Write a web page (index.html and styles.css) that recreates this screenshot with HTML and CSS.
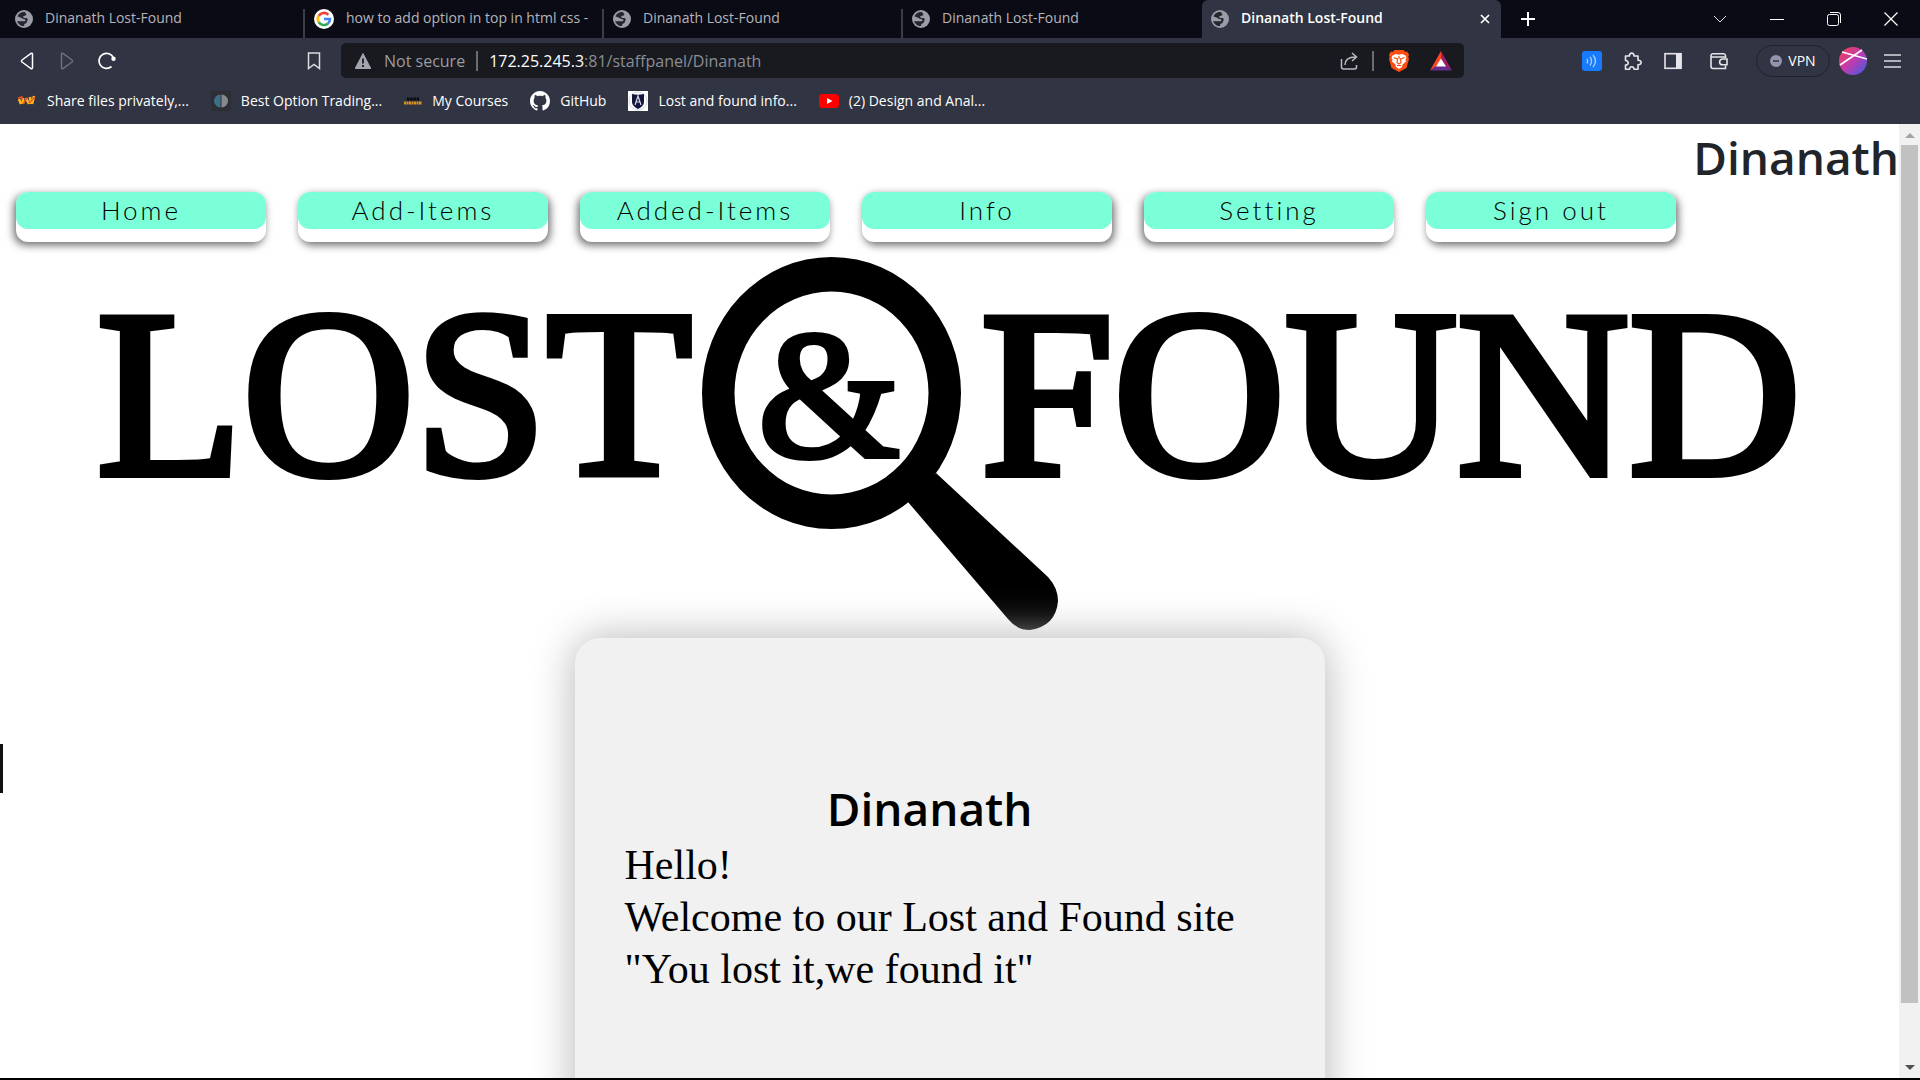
FILE: index.html
```html
<!DOCTYPE html>
<html lang="en">
<head>
<meta charset="utf-8">
<title>Dinanath Lost-Found</title>
<link rel="stylesheet" href="styles.css">
</head>
<body>
<svg class="defs" aria-hidden="true">
  <symbol id="globe" viewBox="0 0 18 18">
    <circle cx="9" cy="9" r="9" fill="#9a9da8"/>
    <path d="M10 2C6.500 1.600 3.500 3.300 2.300 6.500c1.300-.3 2 .8 3.200 1 .8.200 1.300 1 2.400 1.200 1.200.2 2.300.4 2.600 1.400.2.900-1 1.300-2.200 1.200-1.600-.1-4 .2-6.200-.3C3 14 6 16.500 9.200 16c-.3-1.300.2-2 1.300-2.400 1.500-.6 1.300-2.200 2-3.200.5-.8.200-1.900-.9-2.300-1.300-.4-2.600.2-3.300-.9-.5-.8.300-1.600 1.400-1.500 1.200.1 1.900-.6 1.500-1.600-.2-.7-.9-1-1.200-2.100Z" fill="#25262f"/>
  </symbol>
</svg>

<header class="chrome">
  <div class="tabs">
    <button class="tab"><svg class="icon18"><use href="#globe"/></svg><span>Dinanath Lost-Found</span></button>
    <button class="tab"><svg class="icon20" viewBox="0 0 20 20"><circle cx="10" cy="10" r="10" fill="#fff"/><g fill="none" stroke-width="2.600"><path d="M4.800 6.800A6 6 0 0 1 14.300 5.800" stroke="#ea4335"/><path d="M4.800 13.200A6 6 0 0 1 4.800 6.800" stroke="#fbbc05"/><path d="M13.900 14.500A6 6 0 0 1 4.800 13.200" stroke="#34a853"/><path d="M10 10H16A6 6 0 0 1 13.900 14.500" stroke="#4285f4"/></g></svg><span>how to add option in top in html css -</span></button>
    <button class="tab"><svg class="icon18"><use href="#globe"/></svg><span>Dinanath Lost-Found</span></button>
    <button class="tab"><svg class="icon18"><use href="#globe"/></svg><span>Dinanath Lost-Found</span></button>
    <button class="tab active"><svg class="icon18"><use href="#globe"/></svg><span>Dinanath Lost-Found</span><svg class="close" viewBox="0 0 10 10"><path d="M1 1l8 8M9 1l-8 8" stroke="#fff" stroke-width="1.700"/></svg></button>
    <button class="plain newtab" aria-label="New tab"><svg class="icon16" viewBox="0 0 16 16"><path d="M8 1v14M1 8h14" stroke="#fff" stroke-width="2"/></svg></button>
    <div class="window-controls">
      <button class="plain" aria-label="Search tabs"><svg class="icon14" viewBox="0 0 14 14"><path d="M1 4l6 6 6-6" fill="none" stroke="#ddd"/></svg></button>
      <button class="plain" aria-label="Minimize"><svg class="icon14" viewBox="0 0 14 14"><path d="M0 7.500h14" stroke="#fff"/></svg></button>
      <button class="plain" aria-label="Restore"><svg class="icon14" viewBox="0 0 14 14"><g fill="none" stroke="#fff"><rect x=".5" y="2.500" width="11" height="11" rx="2"/><path d="M3 .5h8a2.500 2.500 0 0 1 2.500 2.500v8"/></g></svg></button>
      <button class="plain" aria-label="Close"><svg class="icon14" viewBox="0 0 14 14"><path d="M.5.5l13 13M13.500.5l-13 13" stroke="#fff" stroke-width="1.200"/></svg></button>
    </div>
  </div>

  <div class="toolbar">
    <div class="nav-tools">
      <button class="plain" aria-label="Back"><svg class="icon18" viewBox="0 0 18 18"><path d="M14.500 2v14a1 1 0 0 1-1.500.7L4 10a1.200 1.200 0 0 1 0-2l9-6.700a1 1 0 0 1 1.500.7Z" fill="none" stroke="#fff" stroke-width="1.500"/></svg></button>
      <button class="plain" aria-label="Forward"><svg class="icon18" viewBox="0 0 18 18"><path d="M3.500 2v14a1 1 0 0 0 1.500.7L14 10a1.200 1.200 0 0 0 0-2L5 1.300A1 1 0 0 0 3.500 2Z" fill="none" stroke="#6d6f7c" stroke-width="1.500"/></svg></button>
      <button class="plain" aria-label="Reload"><svg class="icon18" viewBox="0 0 18 18"><path d="M13.500 14.500A7.500 7.500 0 1 1 15.500 6" fill="none" stroke="#fff" stroke-width="1.700"/><circle cx="15.500" cy="6.800" r="2.200" fill="#fff"/></svg></button>
      <button class="plain mark" aria-label="Bookmark"><svg class="icon18" viewBox="0 0 18 18"><path d="M3.500 1h11v15.500L9 12.500l-5.500 4Z" fill="none" stroke="#ddd" stroke-width="1.500"/></svg></button>
    </div>
    <div class="address">
      <svg class="icon16" viewBox="0 0 16 16"><path d="M8 .5L15.800 15.500H.2Z" fill="#a3a6af" stroke="#a3a6af" stroke-linejoin="round"/><path d="M8 5.500v5M8 12v2" stroke="#181a20" stroke-width="1.800"/></svg>
      <span class="secure">Not secure</span>
      <span class="bar"></span>
      <span class="url"><b>172.25.245.3</b>:81/staffpanel/Dinanath</span>
      <button class="plain" aria-label="Share"><svg class="icon18" viewBox="0 0 18 18"><g fill="none" stroke="#b9bbc1" stroke-width="1.500"><path d="M1.500 7v8a2 2 0 0 0 2 2h11a2 2 0 0 0 2-2v-2"/><path d="M5 13c0-5 3-8 10.500-8M12 1l4.500 4-4.500 4"/></g></svg></button>
      <span class="bar bar-gap"></span>
      <button class="plain shield" aria-label="Brave Shields"><svg class="icon22" viewBox="0 0 22 22"><path d="M6.500 0h9l1.500 1.800 2-.3 2 3-.7 2.500.7 2-2.500 9L11 22l-7.500-4L1 9l.7-2L1 4.500l2-3 2 .3Z" fill="#fb4e12"/><path d="M8 4l3 .7L14 4l3.500 1.500 1 2.500-1 1.500.5 2-3.500 3L14 17l-3 2-3-2-.5-2.500-3.500-3 .5-2-1-1.500 1-2.500Z" fill="#fff"/><path d="M5.500 7.500L9.500 9l-.500 3.500L11 14l2-1.500L12.500 9l4-1.500M11 6v3M9 15.500h4" stroke="#fb4e12" stroke-width="1.200" fill="none"/></svg></button>
      <button class="plain" aria-label="Rewards"><svg class="icon22" viewBox="0 0 22 22"><path d="M11 1L0 20.500 11 13Z" fill="#ff4724"/><path d="M11 1l11 19.500L11 13Z" fill="#9e1f63"/><path d="M0 20.500h22L11 13Z" fill="#662d91"/><path d="M11 8.500l5 8H6Z" fill="#fff"/></svg></button>
    </div>
    <div class="extensions">
      <button class="plain ext" aria-label="Read aloud"><svg class="icon20" viewBox="0 0 20 20"><rect width="20" height="20" rx="3" fill="#177bfb"/><path d="M5 8q1.500 2.200 0 4.500M8 6q3 4 0 8.500M11 4q5 6 0 12" fill="none" stroke="#a6cbff" stroke-width="1.400"/></svg></button>
      <button class="plain ext" aria-label="Extensions"><svg class="icon20" viewBox="0 0 20 20"><path d="M2.500 5h4c-.6-3.800 5-3.800 4.500 0h4v4.300c4.200-.3 4.200 4.800 0 4.500v4.500h-4c.2-3.500-4.600-3.500-4.400 0H2.500v-4.200c3.600 0 3.600-4.600 0-4.600Z" fill="none" stroke="#e6e6ea" stroke-width="1.600" stroke-linejoin="round"/></svg></button>
      <button class="plain ext wide" aria-label="Side panel"><svg class="icon18" viewBox="0 0 18 18"><rect x="1" y="1.700" width="16" height="14.600" fill="none" stroke="#e6e6ea" stroke-width="1.600"/><path d="M12 1h5.500v16H12Z" fill="#e6e6ea"/></svg></button>
      <button class="plain ext wide" aria-label="Wallet"><svg class="icon18" viewBox="0 0 18 18"><g fill="none" stroke="#e6e6ea" stroke-width="1.600"><path d="M15.500 6V3.500A2 2 0 0 0 13.500 1.700H3a2 2 0 0 0-2 2v10.800a2 2 0 0 0 2 2h12.500V13.500M1.500 5h14"/><path d="M17 7h-4.500a2.800 2.800 0 0 0 0 5.800H17Z"/></g></svg></button>
      <button class="vpn"><svg class="icon12" viewBox="0 0 12 12"><circle cx="6" cy="6" r="6" fill="#9394ab"/><path d="M3 6h6" stroke="#313442" stroke-width="1.500"/></svg>VPN</button>
      <button class="plain" aria-label="Profile"><svg class="icon28" viewBox="0 0 28 28"><defs><linearGradient id="av" x1="0" y1="0" x2="1" y2="1"><stop offset="0" stop-color="#f5414d"/><stop offset=".5" stop-color="#c03bb0"/><stop offset="1" stop-color="#355ee5"/></linearGradient></defs><circle cx="14" cy="14" r="14" fill="url(#av)"/><path d="M1 18L23 3M3 5l25 7" stroke="#fff" stroke-width="1.600"/></svg></button>
      <button class="plain menu" aria-label="Menu"><svg class="icon18" viewBox="0 0 18 18"><path d="M0 3h17M0 9h17M0 15h17" stroke="#d9dae0" stroke-width="1.700"/></svg></button>
    </div>
  </div>

  <nav class="bookmarks">
    <a href="#"><svg class="icon20" viewBox="0 0 20 20"><path d="M2 8l2 5M6 7v6M9 7l3 6M13 6l1 7M17 5l-2 8" stroke="#ffb320" stroke-width="2.600"/><path d="M1 7l4-1v3M6 13l4-6M12 12l6-6" stroke="#e8551b" stroke-width="1.400" fill="none"/></svg><span>Share files privately,...</span></a>
    <a href="#"><svg class="icon20" viewBox="0 0 20 20"><rect width="20" height="20" rx="2" fill="#2d2f35"/><path d="M9.500 3.500v13a6.500 6.500 0 0 1 0-13Z" fill="#3c7087"/><path d="M10.500 3.500v13a6.500 6.500 0 0 0 0-13Z" fill="#85898d"/></svg><span>Best Option Trading...</span></a>
    <a href="#"><svg class="icon18" viewBox="0 0 18 18"><path d="M3 7h12" stroke="#0b0b0d" stroke-width="3" stroke-dasharray="2.500 .7"/><path d="M0 11h18" stroke="#d8921b" stroke-width="3" stroke-dasharray="2 .5"/></svg><span>My Courses</span></a>
    <a href="#"><svg class="icon20" viewBox="0 0 16 16"><path fill="#fff" d="M8 0C3.580 0 0 3.580 0 8c0 3.540 2.290 6.530 5.470 7.590.4.070.55-.17.55-.38 0-.19-.01-.82-.01-1.490-2.010.37-2.530-.49-2.690-.94-.09-.23-.48-.94-.82-1.130-.28-.15-.68-.52-.01-.53.63-.01 1.080.58 1.230.82.72 1.210 1.870.87 2.330.66.07-.52.28-.87.51-1.070-1.780-.2-3.640-.89-3.640-3.950 0-.87.31-1.590.82-2.150-.08-.2-.36-1.020.08-2.120 0 0 .67-.21 2.200.82.64-.18 1.320-.27 2-.27s1.360.09 2 .27c1.530-1.040 2.200-.82 2.200-.82.44 1.100.16 1.920.08 2.120.51.56.82 1.270.82 2.150 0 3.070-1.870 3.750-3.650 3.950.29.25.54.73.54 1.480 0 1.070-.01 1.930-.01 2.200 0 .21.15.46.55.38A8.010 8.010 0 0 0 16 8c0-4.420-3.580-8-8-8Z"/></svg><span>GitHub</span></a>
    <a href="#"><svg class="icon20" viewBox="0 0 20 20"><rect width="20" height="20" fill="#fff"/><circle cx="10" cy="10" r="9" fill="none" stroke="#ccd" stroke-width=".8"/><path d="M4 3q6 1.500 12 0v8q0 4-6 7-6-3-6-7Z" fill="#12163f"/><path d="M7 14l3-9 3 9M8 11h4" fill="none" stroke="#d6d7e2" stroke-width="1.200"/></svg><span>Lost and found info...</span></a>
    <a href="#"><svg class="icon20" viewBox="0 0 20 20"><rect y="3" width="20" height="14" rx="3.500" fill="#f00"/><path d="M8 7l5.500 3L8 13Z" fill="#fff"/></svg><span>(2) Design and Anal...</span></a>
  </nav>
</header>

<div class="view">
  <main class="page">
    <h1 class="title">Dinanath</h1>
    <nav class="menu-row">
      <div class="pill left"><a href="#">Home</a></div>
      <div class="pill right"><a href="#">Add-Items</a></div>
      <div class="pill left"><a href="#">Added-Items</a></div>
      <div class="pill right"><a href="#">Info</a></div>
      <div class="pill left"><a href="#">Setting</a></div>
      <div class="pill right"><a href="#">Sign out</a></div>
    </nav>
    <svg class="logo" viewBox="0 0 1899 396">
      <g class="logo-word">
        <text x="97" y="232">LOST</text>
        <text x="981" y="232">FOUND</text>
      </g>
      <text class="logo-amp" x="829" y="214" text-anchor="middle">&amp;</text>
      <path fill-rule="evenodd" d="M702 151a129.500 136 0 1 0 259 0a129.500 136 0 1 0-259 0ZM734.500 151a97 101.500 0 1 1 194 0a97 101.500 0 1 1-194 0Z"/>
      <path d="M936 231L1048 335Q1058 346 1058 359Q1056 384 1030 388Q1017 388 1008 377L908 260Z"/>
    </svg>
    <section class="card">
      <div class="message">
        <h1>Dinanath</h1>
        <p>Hello!<br>Welcome to our Lost and Found site<br>"You lost it,we found it"</p>
      </div>
    </section>
    <span class="edge-mark"></span>
  </main>
  <div class="scrollbar">
    <svg class="arrow" viewBox="0 0 10 5"><path d="M5 0l5 5H0Z" fill="#a3a3a3"/></svg>
    <div class="track"><div class="thumb"></div></div>
    <svg class="arrow" viewBox="0 0 10 5"><path d="M5 5l5-5H0Z" fill="#505050"/></svg>
  </div>
</div>
</body>
</html>
```
FILE: styles.css
```css
* { box-sizing: border-box; }
body {
  margin: 0;
  height: 100vh;
  display: flex;
  flex-direction: column;
  overflow: hidden;
  border-bottom: 2px solid #000;
  background: #fff;
  font-family: "Open Sans", "Noto Sans", sans-serif;
}
button { font: inherit; color: inherit; border: 0; padding: 0; background: none; }
svg { display: block; flex: none; }
a { color: inherit; text-decoration: none; }
.defs { position: absolute; width: 0; height: 0; }
.icon12 { width: 12px; height: 12px; }
.icon14 { width: 14px; height: 14px; }
.icon16 { width: 16px; height: 16px; }
.icon18 { width: 18px; height: 18px; }
.icon20 { width: 20px; height: 20px; }
.icon22 { width: 22px; height: 22px; }
.icon28 { width: 28px; height: 28px; }

/* Browser frame */
.chrome { flex: none; background: #313442; color: #fff; font-size: 14px; }
.tabs { display: flex; height: 38px; padding-left: 6px; background: #0b0b15; }
.tab {
  flex: 0 1 299px;
  display: flex;
  align-items: center;
  gap: 12px;
  padding: 0 11px 0 9px;
  min-width: 0;
  color: #b4b5ba;
  line-height: 18px;
  white-space: nowrap;
  background: linear-gradient(#3c3d45, #3c3d45) right bottom / 2px 29px no-repeat;
}
.tab span { flex: 1; overflow: hidden; padding-bottom: 2px; text-align: left; }
.tab:nth-child(4) { background: none; }
.tab.active { background: #313442; color: #fff; border-radius: 6px 6px 0 0; font-weight: 600; }
.close { width: 10px; height: 10px; }
.plain { display: flex; align-items: center; justify-content: center; }
.newtab { width: 54px; }
.window-controls { display: flex; margin-left: auto; padding-right: 1px; }
.window-controls button { width: 57px; }

.toolbar { display: flex; align-items: center; height: 45px; }
.nav-tools { display: flex; align-items: center; gap: 22px; width: 341px; padding: 0 18px; }
.mark { margin-left: auto; }
.address {
  flex: 1;
  display: flex;
  align-items: center;
  height: 35px;
  padding: 0 12px 0 14px;
  border-radius: 5px;
  background: #181a20;
  color: #8b8d93;
  font-size: 16px;
}
.secure { margin-left: 13px; color: #9a9ca2; }
.bar { width: 2px; height: 20px; margin: 0 11px; background: #6a6c72; }
.bar-gap { margin: 0 14px; }
.url { flex: 1; }
.url b { font-weight: 400; color: #fff; }
.shield { margin-right: 20px; }
.extensions { display: flex; align-items: center; width: 456px; padding: 0 18px 0 118px; }
.ext { margin-right: 21px; }
.ext.wide { margin-right: 28px; }
.vpn {
  display: flex;
  align-items: center;
  justify-content: center;
  gap: 6px;
  width: 74px;
  height: 32px;
  margin-right: 9px;
  border: 1px solid #20222d;
  border-radius: 16px;
}
.menu { margin-left: auto; }
.bookmarks { display: flex; align-items: center; gap: 22px; height: 41px; padding: 0 17px 6px; }
.bookmarks a { display: flex; align-items: center; gap: 10px; white-space: nowrap; }

/* Page */
.view { flex: 1; display: flex; min-height: 0; }
.page { flex: 1; position: relative; overflow: hidden; }
.title { margin: 0; padding: 4px 0 0; font-size: 46px; line-height: 58px; font-weight: 600; text-align: right; color: #212529; }
.menu-row { display: flex; gap: 32px; padding: 6px 16px 0; }
.pill { flex: 0 1 250px; height: 50px; border-radius: 12px; background: #fff; }
.pill.left { box-shadow: -2px 3px 8px rgba(0, 0, 0, .6); }
.pill.right { box-shadow: 2px 3px 8px rgba(0, 0, 0, .6); }
.pill a {
  display: block;
  height: 37px;
  border-radius: 12px;
  background: #7affd8;
  color: #000;
  font-family: Lato, sans-serif;
  font-size: 26px;
  font-weight: 300;
  line-height: 36px;
  letter-spacing: 3px;
  text-align: center;
}
.logo { width: 100%; height: auto; }
.logo-word { font-family: "Liberation Serif", serif; font-size: 238px; stroke: #000; stroke-width: 8px; }
.logo-amp { font-family: "Liberation Serif", serif; font-size: 182px; stroke: #000; stroke-width: 6px; }
.card {
  display: flex;
  justify-content: flex-start;
  width: 750px;
  max-width: 100%;
  min-height: 640px;
  margin: 0 auto;
  padding: 139px 50px 50px;
  border-radius: 25px;
  background: #f1f1f2;
  box-shadow: 0 0 44px #b5b5b5;
  position: relative;
  color: #000;
}
.message h1 { margin: 0; font-size: 46px; line-height: 62px; font-weight: 600; text-align: center; }
.message p { margin: 0; font-family: "Liberation Serif", serif; font-size: 42px; line-height: 52px; }
.edge-mark { position: absolute; left: 0; top: 620px; width: 3px; height: 49px; background: #111; }

.scrollbar { display: flex; flex-direction: column; align-items: center; gap: 7px; width: 21px; padding: 9px 0 8px; background: #f1f1f1; }
.arrow { width: 10px; height: 5px; }
.track { flex: 1; width: 17px; }
.thumb { height: 94%; background: #c1c1c1; }
```
